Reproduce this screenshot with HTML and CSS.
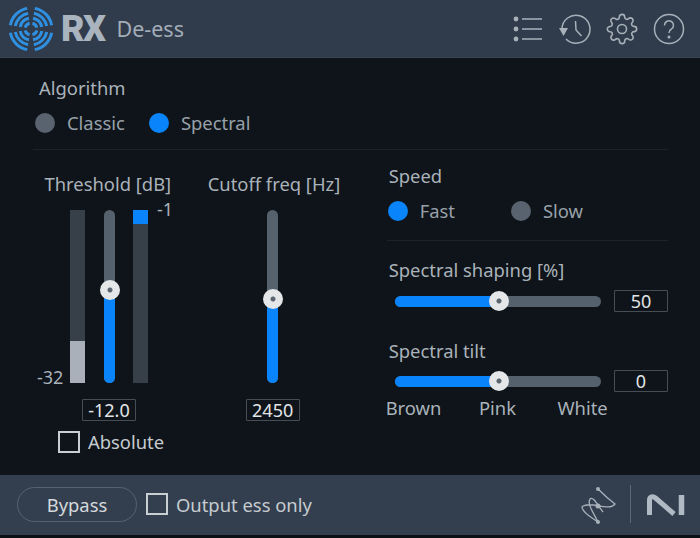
FILE: index.html
```html
<!DOCTYPE html>
<html lang="en">
<head>
	<meta charset="utf-8" />
	<title>RX De-ess</title>
	<link rel="stylesheet" href="styles.css">
</head>
<body>
<div class="plugin">

	<header class="topbar">
		<svg class="logo" viewBox="0 0 46 46" width="46" height="46">
			<g class="logo-rings">
				<circle cx="23" cy="23" r="21" pathLength="100" stroke-dasharray="19 6" stroke-dashoffset="-3" />
				<circle cx="23" cy="23" r="16" pathLength="100" stroke-dasharray="19 6" stroke-dashoffset="-3" />
				<circle cx="23" cy="23" r="11" pathLength="100" stroke-dasharray="19 6" stroke-dashoffset="-3" />
				<circle cx="23" cy="23" r="6" pathLength="100" stroke-dasharray="17 8" stroke-dashoffset="-4" />
			</g>
		</svg>
		<span class="brand">RX</span>
		<span class="module">De-ess</span>

		<div class="tools">
			<svg class="tool tool-list" viewBox="0 0 30 24" width="30" height="24">
				<circle class="fill" cx="3" cy="2" r="2.400" />
				<circle class="fill" cx="3" cy="12" r="2.400" />
				<circle class="fill" cx="3" cy="22" r="2.400" />
				<path d="M9 2H29M9 12H29M9 22H29" />
			</svg>
			<svg class="tool tool-history" viewBox="0 0 32 32" width="32" height="32">
				<path d="M2 16A14 14 0 1 1 6 26" />
				<path class="fill" d="M-1 15H8L3.500 23Z" />
				<path d="M15.500 8L16 17L21.500 23" />
			</svg>
			<svg class="tool tool-gear" viewBox="0 0 24 24" width="32" height="32">
				<circle cx="12" cy="12" r="3.400" />
				<path d="M19.400 15a1.650 1.650 0 0 0 .33 1.820l.06.06a2 2 0 0 1 0 2.830 2 2 0 0 1-2.830 0l-.06-.06a1.650 1.650 0 0 0-1.820-.33 1.650 1.650 0 0 0-1 1.510V21a2 2 0 0 1-2 2 2 2 0 0 1-2-2v-.09A1.650 1.650 0 0 0 9 19.400a1.650 1.650 0 0 0-1.820.33l-.06.06a2 2 0 0 1-2.830 0 2 2 0 0 1 0-2.830l.06-.06a1.650 1.650 0 0 0 .33-1.820 1.650 1.650 0 0 0-1.510-1H3a2 2 0 0 1-2-2 2 2 0 0 1 2-2h.09A1.650 1.650 0 0 0 4.600 9a1.650 1.650 0 0 0-.33-1.820l-.06-.06a2 2 0 0 1 0-2.830 2 2 0 0 1 2.830 0l.06.06a1.650 1.650 0 0 0 1.820.33H9a1.650 1.650 0 0 0 1-1.510V3a2 2 0 0 1 2-2 2 2 0 0 1 2 2v.09a1.650 1.650 0 0 0 1 1.510 1.650 1.650 0 0 0 1.820-.33l.06-.06a2 2 0 0 1 2.830 0 2 2 0 0 1 0 2.830l-.06.06a1.650 1.650 0 0 0-.33 1.820V9a1.650 1.650 0 0 0 1.510 1H21a2 2 0 0 1 2 2 2 2 0 0 1-2 2h-.09a1.650 1.650 0 0 0-1.510 1z" />
			</svg>
			<svg class="tool tool-help" viewBox="0 0 32 32" width="32" height="32">
				<circle cx="16" cy="16" r="14.500" />
				<path d="M11.500 12.500A4.500 4.500 0 1 1 18.500 16C16.500 17.200 16 18 16 20" />
				<circle class="fill" cx="16" cy="24" r="1.500" />
			</svg>
		</div>
	</header>

	<main class="panel">
		<section class="algorithm">
			<div class="label">Algorithm</div>
			<div class="radios radios-algo">
				<span class="radio"></span><span class="radio-text classic">Classic</span>
				<span class="radio on"></span><span class="radio-text">Spectral</span>
			</div>
		</section>

		<section class="columns">
			<div class="threshold">
				<div class="label centered">Threshold [dB]</div>
				<div class="meters">
					<span class="scale scale-low">-32</span>
					<div class="meter"><div class="meter-level"></div></div>
					<div class="vslider">
						<div class="vslider-fill fill-threshold"></div>
						<span class="thumb thumb-threshold"></span>
					</div>
					<div class="meter"><div class="meter-gain"></div></div>
					<span class="scale scale-high">-1</span>
				</div>
				<div class="value value-low">-12.0</div>
				<label class="check check-absolute"><span class="box"></span>Absolute</label>
			</div>

			<div class="cutoff">
				<div class="label centered">Cutoff freq [Hz]</div>
				<div class="meters">
					<div class="vslider">
						<div class="vslider-fill fill-cutoff"></div>
						<span class="thumb thumb-cutoff"></span>
					</div>
				</div>
				<div class="value value-low">2450</div>
			</div>

			<div class="right">
				<div class="label">Speed</div>
				<div class="radios speed">
					<span class="radio on"></span><span class="radio-text fast">Fast</span>
					<span class="radio"></span><span class="radio-text">Slow</span>
				</div>
				<hr class="rule">
				<div class="label shaping">Spectral shaping [%]</div>
				<div class="hrow">
					<div class="hslider">
						<div class="hslider-fill"></div>
						<span class="thumb thumb-h"></span>
					</div>
					<div class="value">50</div>
				</div>
				<div class="label tilt">Spectral tilt</div>
				<div class="hrow hrow-tilt">
					<div class="hslider">
						<div class="hslider-fill"></div>
						<span class="thumb thumb-h"></span>
					</div>
					<div class="value">0</div>
				</div>
				<div class="tilt-marks">
					<span>Brown</span><span>Pink</span><span>White</span>
				</div>
			</div>
		</section>
	</main>

	<footer class="bottombar">
		<button type="button" class="bypass">Bypass</button>
		<label class="check check-output"><span class="box"></span>Output ess only</label>
		<svg class="connect" viewBox="0 0 50 50" width="50" height="50">
			<path d="M23 7C28 12 36 19 40 22C34 30 14 18 7 25C8 32 18 36 23 40C18 30 12 22 15 17C18 14 22 22 28 30" />
			<circle class="fill" cx="23" cy="7" r="2" />
			<circle class="fill" cx="23" cy="40" r="2" />
			<circle class="fill" cx="23" cy="24" r="2.500" />
		</svg>
		<span class="divider"></span>
		<svg class="ni" viewBox="0 0 40 24" width="40" height="24">
			<path d="M3.500 22V7C3.500 3.500 7 3 9.500 5L28 21" />
			<path d="M35.500 2V22" class="ni-bar" />
		</svg>
	</footer>
</div>
</body>
</html>
```

FILE: styles.css
```css
*{
	box-sizing:border-box;
}

html,body{
	margin:0;
	height:100%;
	background:#0b1014;
}

body{
	font-family:"Noto Sans","Open Sans",sans-serif;
	font-size:18.400px;
	color:#aab2ba;
}

.plugin{
	width:700px;
	height:538px;
	display:flex;
	flex-direction:column;
}

/* top bar */
.topbar{
	height:58px;
	display:flex;
	align-items:center;
	padding-left:8px;
	background:#303c4b;
	border-bottom:1px solid #3a4654;
}

.logo{
	flex:none;
}

.logo-rings circle{
	fill:none;
	stroke:#2f8fe0;
	stroke-width:3;
}

.brand{
	margin-left:7px;
	font-family:Roboto,sans-serif;
	font-weight:900;
	font-size:36px;
	letter-spacing:-1.500px;
	color:#a9b4bf;
}

.module{
	margin-left:12px;
	font-size:21.500px;
	color:#a3adb8;
}

.tools{
	margin-left:auto;
	display:flex;
	align-items:center;
	padding-right:15px;
}

.tool,.connect{
	fill:none;
	stroke:#a8b1ba;
	stroke-width:1.500;
	overflow:visible;
}

.tool .fill,.connect .fill{
	fill:#a8b1ba;
	stroke:none;
}

.tool-history{
	margin-left:17px;
}

.tool-gear{
	stroke-width:1.200;
	margin-left:14px;
}

.tool-help{
	margin-left:15px;
}

/* main panel */
.panel{
	height:417px;
	padding:0 32px 0 33px;
	background:#0e1419;
}

.label{
	color:#aab2ba;
	line-height:26px;
}

.centered{
	text-align:center;
	white-space:nowrap;
}

.algorithm{
	height:92px;
	padding:17px 0 0 6px;
	border-bottom:1px solid #1c2228;
}

.radios{
	display:flex;
	align-items:center;
	margin-top:9px;
	line-height:26px;
}

.radios-algo{
	margin-left:-4px;
}

.radio{
	flex:none;
	width:20px;
	height:20px;
	border-radius:50%;
	background:#59636f;
}

.radio.on{
	background:#0a84fa;
}

.radio-text{
	margin-left:12px;
	color:#98a1aa;
}

.classic{
	margin-right:24px;
}

.columns{
	display:flex;
}

.threshold{
	width:150px;
	padding-top:21px;
}

.cutoff{
	width:130px;
	margin-left:25px;
	padding-top:21px;
}

.meters{
	height:173px;
	margin-top:13px;
	display:flex;
	justify-content:center;
}

.threshold .meters{
	justify-content:flex-start;
	padding-left:4px;
}

.scale{
	font-size:18px;
	line-height:20px;
	color:#aab2ba;
}

.scale-low{
	width:27px;
	align-self:flex-end;
	margin-bottom:-4px;
}

.scale-high{
	margin-left:9px;
	margin-top:-11px;
}

.meter{
	position:relative;
	width:15px;
	margin-left:6px;
	background:#373f48;
}

.vslider + .meter{
	margin-left:18px;
}

.meter-level{
	position:absolute;
	left:0;
	right:0;
	bottom:0;
	height:42px;
	background:#a9b0b9;
}

.meter-gain{
	height:14px;
	background:#0a84fa;
}

.vslider{
	position:relative;
	width:11px;
	border-radius:6px;
	background:#55616d;
}

.meter + .vslider{
	margin-left:19px;
}

.vslider-fill{
	position:absolute;
	left:0;
	right:0;
	bottom:0;
	border-radius:0 0 6px 6px;
	background:#0a84fa;
}

.fill-threshold{
	height:94px;
}

.fill-cutoff{
	height:84px;
}

.thumb{
	position:absolute;
	width:20px;
	height:20px;
	border-radius:50%;
	background:radial-gradient(circle,#5b6570 0,#5b6570 2px,#e4e6e8 3px);
}

.thumb-threshold{
	left:-4.500px;
	bottom:83px;
}

.thumb-cutoff{
	left:-4.500px;
	bottom:74px;
}

.value{
	flex:none;
	width:54px;
	height:22px;
	border:1px solid #464d55;
	border-radius:1px;
	font-size:18px;
	line-height:21px;
	text-align:center;
	color:#e2e5e8;
}

.value-low{
	margin:16px auto 0;
}

.threshold .value-low{
	margin-left:49px;
}

.check{
	display:flex;
	align-items:center;
	white-space:nowrap;
}

.box{
	flex:none;
	width:22px;
	height:22px;
	margin-right:8px;
	border:2px solid #c9ced3;
}

.check-absolute{
	margin:8px 0 0 25px;
	color:#c6cbd0;
}

/* right column */
.right{
	width:282px;
	margin-left:49px;
	padding-top:13px;
}

.right .label{
	padding-left:2px;
}

.speed{
	margin:9px 0 0 1px;
}

.fast{
	margin-right:56px;
}

.rule{
	height:1px;
	margin:16px 0 0;
	border:0;
	background:#1c2228;
}

.shaping{
	margin-top:16px;
}

.hrow{
	display:flex;
	align-items:center;
	justify-content:space-between;
	margin-top:7px;
	padding-left:8px;
}

.hrow-tilt{
	margin-top:6px;
}

.hslider{
	position:relative;
	width:206px;
	height:11px;
	border-radius:6px;
	background:#55616d;
}

.hslider-fill{
	width:104px;
	height:100%;
	border-radius:6px 0 0 6px;
	background:#0a84fa;
}

.thumb-h{
	left:94px;
	top:-4.500px;
}

.tilt{
	margin-top:26px;
}

.tilt-marks{
	display:flex;
	justify-content:space-between;
	width:222px;
	margin:3px 0 0 -1px;
	line-height:26px;
	color:#aab2ba;
}

.tilt-marks span:nth-child(2){
	margin-left:-4px;
}

/* bottom bar */
.bottombar{
	height:60px;
	display:flex;
	align-items:center;
	padding:0 0 2px 17px;
	background:#333f4e;
}

.bypass{
	width:120px;
	height:35px;
	padding:0;
	border:1px solid #56626f;
	border-radius:18px;
	background:transparent;
	font-family:inherit;
	font-size:18.400px;
	color:#d5d9dd;
}

.check-output{
	margin-left:9px;
	color:#c6cbd0;
}

.connect{
	margin:6px 0 0 auto;
	stroke-width:1.300;
}

.divider{
	width:1px;
	height:38px;
	margin-left:5px;
	background:#5c6875;
}

.ni{
	margin:2px 14px 0 15px;
	fill:none;
	stroke:#b0bac4;
	stroke-width:5;
}

.ni-bar{
	stroke-width:5.500;
}
```
